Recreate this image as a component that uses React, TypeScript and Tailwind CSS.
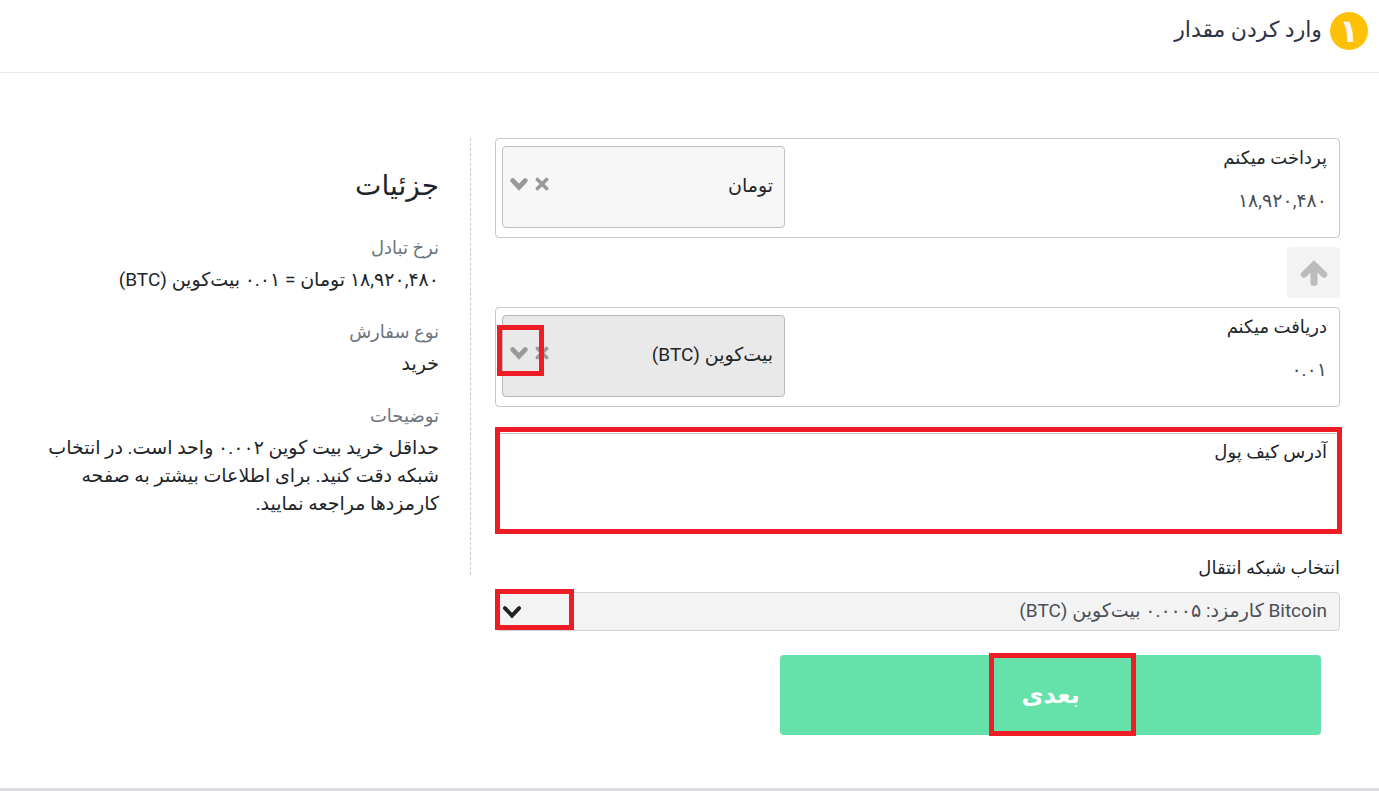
import { useState } from "react";
import type { ReactNode } from "react";

const details = [
  { title: "نرخ تبادل", text: "۱۸,۹۲۰,۴۸۰ تومان = ۰.۰۱ بیت‌کوین (BTC)" },
  { title: "نوع سفارش", text: "خرید" },
  {
    title: "توضیحات",
    text: "حداقل خرید بیت کوین ۰.۰۰۲ واحد است. در انتخاب شبکه دقت کنید. برای اطلاعات بیشتر به صفحه کارمزدها مراجعه نمایید.",
  },
];

function ChevronIcon({ strokeWidth, className }: { strokeWidth: number; className?: string }) {
  return (
    <svg viewBox="0 0 18 14" fill="none" stroke="currentColor" className={className}>
      <path d="M2.8 3.6 9 10.2l6.2-6.6" strokeWidth={strokeWidth} strokeLinecap="round" />
    </svg>
  );
}

function CloseIcon() {
  return (
    <svg viewBox="0 0 14 14" width="14" height="14" fill="none" stroke="currentColor">
      <path d="m2.4 2.4 9.2 9.2M11.6 2.4l-9.2 9.2" strokeWidth="3.6" strokeLinecap="round" />
    </svg>
  );
}

function ArrowUpIcon() {
  return (
    <svg viewBox="0 0 28 28" width="28" height="28" fill="none" stroke="currentColor">
      <path d="M4 15.5 14 5.7l10 9.8" strokeWidth="6.5" strokeLinecap="round" />
      <path d="M14 7v16.5" strokeWidth="7" strokeLinecap="round" />
    </svg>
  );
}

type AmountFieldProps = {
  id: string;
  label: string;
  initial: string;
  currency: string;
  selectClass: string;
  children?: ReactNode;
};

function AmountField({ id, label, initial, currency, selectClass, children }: AmountFieldProps) {
  const [value, setValue] = useState(initial);

  return (
    <div className="flex h-[100px] rounded border border-[#c8c8c8] py-[7px] pl-1.5">
      <div className="flex min-w-0 flex-1 flex-col pr-3">
        <label htmlFor={id} className="text-[18px] leading-6 text-[#212529]">
          {label}
        </label>
        <input
          id={id}
          value={value}
          onChange={(e) => setValue(e.target.value)}
          className="mt-3.5 h-8 w-full text-[19px] text-[#495057] outline-none"
        />
      </div>
      <div className="relative w-[283px] shrink-0">
        <select
          aria-label={`ارز ${label}`}
          className={`h-[82px] w-full appearance-none rounded border px-[11px] pb-0.5 text-[19px] text-[#212529] ${selectClass}`}
        >
          <option>{currency}</option>
        </select>
        <div className="pointer-events-none absolute top-0 left-2 flex h-[76px] items-center gap-[7px] text-[#999]">
          <button type="button" aria-label="حذف" className="pointer-events-auto">
            <CloseIcon />
          </button>
          <ChevronIcon strokeWidth={4.8} className="h-3.5 w-[18px]" />
        </div>
        {children}
      </div>
    </div>
  );
}

export default function App() {
  const [address, setAddress] = useState("");

  return (
    <div
      dir="rtl"
      className="flex min-h-screen flex-col border-b-[3px] border-[#dcdce0] bg-white font-[Roboto,'DejaVu_Sans',sans-serif]"
    >
      <header className="flex h-[73px] items-start gap-2 border-b border-[#e8e8e8] px-[11px] pt-3">
        <span className="flex size-[38px] items-center justify-center rounded-full bg-[#ffc107] text-[32px] leading-none font-bold text-[#f8f8f8]">
          ۱
        </span>
        <h1 className="text-[22px] leading-9 text-[#2f3347]">وارد کردن مقدار</h1>
      </header>

      <main className="flex items-start gap-6 pt-[65px] pr-[39px] pb-[53px] pl-10">
        <form className="w-[65%] shrink-0" onSubmit={(e) => e.preventDefault()}>
          <AmountField
            id="pay"
            label="پرداخت میکنم"
            initial="۱۸,۹۲۰,۴۸۰"
            currency="تومان"
            selectClass="border-[#c0c0c0] bg-[#f7f7f7]"
          />

          <button
            type="button"
            aria-label="جابجایی"
            className="my-[9px] flex h-[51px] w-[53px] items-center justify-center rounded bg-[#f3f3f3] text-[#bcbcbc]"
          >
            <ArrowUpIcon />
          </button>

          <AmountField
            id="receive"
            label="دریافت میکنم"
            initial="۰.۰۱"
            currency="بیت‌کوین (BTC)"
            selectClass="border-[#b8b8b8] bg-[#e9e9e9]"
          >
            <div className="pointer-events-none absolute top-[10px] -left-[5px] h-[51px] w-[47px] border-5 border-[#ee1c25]" />
          </AmountField>

          <div className="relative mt-[26px] flex h-[99px] flex-col rounded border border-[#c8c8c8] px-3 pt-1.5">
            <label htmlFor="address" className="text-[18px] leading-6 text-[#212529]">
              آدرس کیف پول
            </label>
            <input
              id="address"
              value={address}
              onChange={(e) => setAddress(e.target.value)}
              className="mt-3.5 h-8 w-full text-[19px] text-[#495057] outline-none"
            />
            <div className="pointer-events-none absolute -top-[7px] -right-[3px] -bottom-[3px] -left-px border-5 border-[#ee1c25]" />
          </div>

          <label htmlFor="network" className="mt-6 block text-[18px] leading-6 text-[#212529]">
            انتخاب شبکه انتقال
          </label>
          <div className="relative mt-3">
            <select
              id="network"
              className="h-[39px] w-full appearance-none rounded border border-[#ced4da] bg-[#f3f3f3] px-3 text-[19px] text-[#495057]"
            >
              <option>Bitcoin کارمزد: ۰.۰۰۰۵ بیت‌کوین (BTC)</option>
            </select>
            <ChevronIcon
              strokeWidth={3.4}
              className="pointer-events-none absolute top-3 left-1.5 h-4 w-[22px] text-[#222]"
            />
            <div className="pointer-events-none absolute -top-[3px] left-0 h-[41px] w-[79px] border-5 border-[#ee1c25]" />
          </div>

          <div className="relative mt-6 mr-[19px] w-[64%]">
            <button type="submit" className="h-20 w-full rounded bg-[#65e2aa] text-[24px] font-bold text-white">
              بعدی
            </button>
            <div className="pointer-events-none absolute -top-0.5 right-[185px] h-[83px] w-[147px] border-5 border-[#ee1c25]" />
          </div>
        </form>

        <aside className="h-[437px] min-w-0 flex-1 border-r border-dashed border-[#c8c8c8] pt-7 pr-[31px]">
          <h2 className="text-[28px] leading-10 text-[#212529]">جزئیات</h2>
          <dl className="mt-7">
            {details.map((item) => (
              <div key={item.title} className="mb-6 leading-7">
                <dt className="mb-1 text-[18px] text-[#6c757d]">{item.title}</dt>
                <dd className="text-[19px] text-[#212529]">{item.text}</dd>
              </div>
            ))}
          </dl>
        </aside>
      </main>
    </div>
  );
}
